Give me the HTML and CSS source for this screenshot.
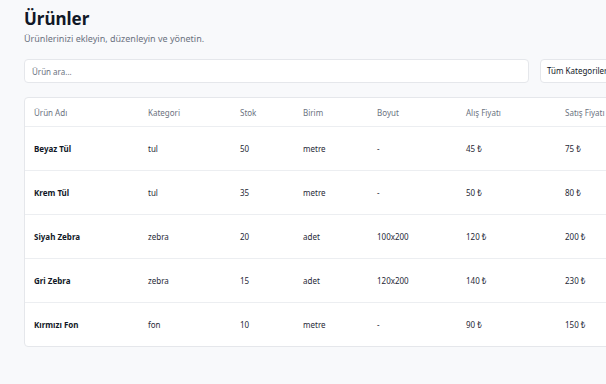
FILE: index.html
```html
<!DOCTYPE html>
<html>
    <head>
        <meta name="viewport" content="width=device-width, initial-scale=1" />
        <title>Ürünler</title>
        <link rel="stylesheet" href="styles.css">
    </head>
<body>

    <div class="page">
        <h1 class="page_title">Ürünler</h1>
        <p class="page_subtitle">Ürünlerinizi ekleyin, düzenleyin ve yönetin.</p>

        <div class="toolbar">
            <input class="search_box" type="text" placeholder="Ürün ara...">
            <div class="select_box">Tüm Kategoriler</div>
        </div>

        <div class="table_card">
            <table class="product_table">
                <thead>
                    <tr>
                        <th class="col_name">Ürün Adı</th>
                        <th class="col_cat">Kategori</th>
                        <th class="col_stock">Stok</th>
                        <th class="col_unit">Birim</th>
                        <th class="col_size">Boyut</th>
                        <th class="col_buy">Alış Fiyatı</th>
                        <th class="col_sell">Satış Fiyatı</th>
                    </tr>
                </thead>
                <tbody>
                    <tr>
                        <td class="name">Beyaz Tül</td><td>tul</td><td>50</td><td>metre</td><td>-</td><td>45 ₺</td><td>75 ₺</td>
                    </tr>
                    <tr>
                        <td class="name">Krem Tül</td><td>tul</td><td>35</td><td>metre</td><td>-</td><td>50 ₺</td><td>80 ₺</td>
                    </tr>
                    <tr>
                        <td class="name">Siyah Zebra</td><td>zebra</td><td>20</td><td>adet</td><td>100x200</td><td>120 ₺</td><td>200 ₺</td>
                    </tr>
                    <tr>
                        <td class="name">Gri Zebra</td><td>zebra</td><td>15</td><td>adet</td><td>120x200</td><td>140 ₺</td><td>230 ₺</td>
                    </tr>
                    <tr>
                        <td class="name">Kırmızı Fon</td><td>fon</td><td>10</td><td>metre</td><td>-</td><td>90 ₺</td><td>150 ₺</td>
                    </tr>
                </tbody>
            </table>
        </div>
    </div>

</body>
</html>
```
FILE: styles.css
```css
body {
    margin: 0;
    font-family: 'Noto Sans', 'Open Sans', sans-serif;
    background-color: #f8f9fb;
    color: #111827;
    overflow: hidden;
}

.page {
    width: 700px;
    padding: 6px 24px 24px 24px;
}

.page_title {
    margin: 0;
    font-size: 17px;
    font-weight: 700;
    line-height: 26px;
}

.page_subtitle {
    margin: 0;
    font-size: 9px;
    line-height: 14px;
    color: #6b7280;
}

.toolbar {
    display: flex;
    gap: 11px;
    margin-top: 13px;
}

.search_box {
    width: 505px;
    height: 24px;
    box-sizing: border-box;
    border: 1px solid #e5e7eb;
    border-radius: 4px;
    background-color: white;
    padding: 0 7px;
    font-family: inherit;
    font-size: 8px;
    color: #111827;
}

.search_box::placeholder {
    color: #6b7280;
}

.select_box {
    width: 120px;
    height: 24px;
    box-sizing: border-box;
    border: 1px solid #e5e7eb;
    border-radius: 4px;
    background-color: white;
    padding: 0 6px;
    font-size: 8px;
    line-height: 22px;
}

.table_card {
    margin-top: 14px;
    width: 643px;
    background-color: white;
    border: 1px solid #e5e7eb;
    border-radius: 4px;
}

.product_table {
    width: 641px;
    border-collapse: collapse;
    table-layout: fixed;
    font-size: 8px;
}

.product_table th {
    height: 28px;
    padding: 0 0 0 9px;
    text-align: left;
    font-weight: 400;
    color: #6b7280;
    border-bottom: 1px solid #eceef1;
}

.product_table td {
    height: 43px;
    padding: 0 0 0 9px;
    color: #1f2937;
    border-bottom: 1px solid #eceef1;
}

.product_table tbody tr:last-child td {
    border-bottom: none;
}

.product_table td.name {
    font-weight: 700;
    color: #111827;
}

.col_name { width: 105px; }
.col_cat { width: 83px; }
.col_stock { width: 54px; }
.col_unit { width: 65px; }
.col_size { width: 80px; }
.col_buy { width: 90px; }
.col_sell { width: 101px; }
```
